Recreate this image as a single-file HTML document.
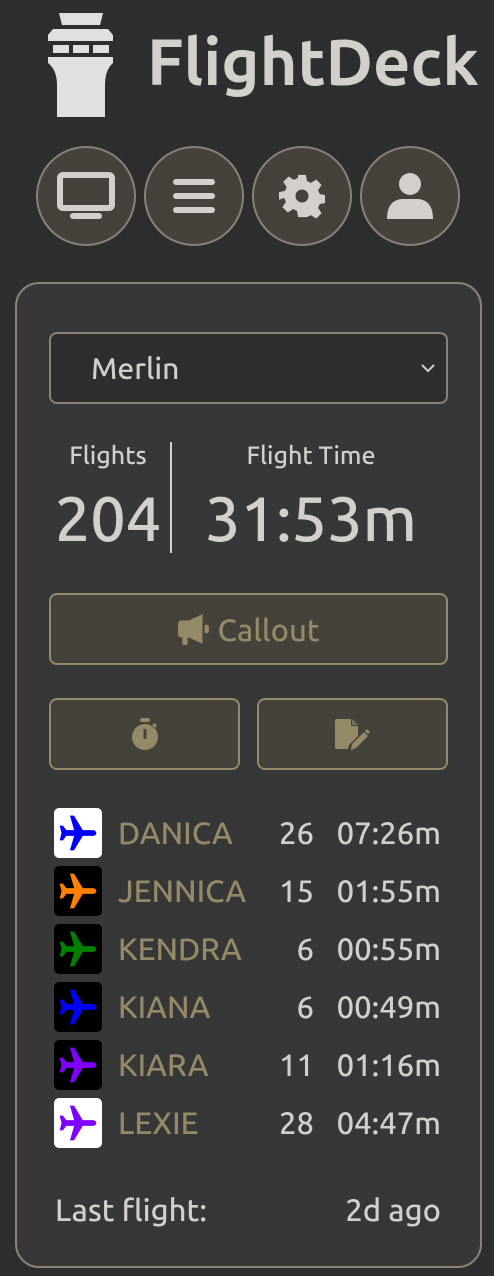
<!DOCTYPE html>
<html><head><meta charset="utf-8"><style>
*{box-sizing:border-box;margin:0;padding:0}
body{width:494px;height:1276px;background:#2e2e2e;font-family:"Ubuntu","Liberation Sans",sans-serif;font-weight:500;color:#d3d0cb;position:relative;overflow:hidden}
.abs{position:absolute}
.title{left:147px;top:20px;font-size:65px;font-weight:bold;color:#d3d0cb;line-height:84px;white-space:nowrap}
.circ{position:absolute;top:146px;width:100px;height:100px;border-radius:50%;background:#45413b;border:2px solid #8a8278;display:flex;align-items:center;justify-content:center}
.card{left:15px;top:282px;width:467px;height:986px;border:2px solid #8a8278;border-radius:24px;background:#373737}
.sel{left:49px;top:332px;width:399px;height:72px;border:2px solid #8a8278;border-radius:8px;background:#2e2e2e;font-size:30px;padding-left:40px;line-height:68px}
.btn{position:absolute;border:2px solid #958a68;border-radius:8px;background:#45413b;color:#958a68;display:flex;align-items:center;justify-content:center}
.row{position:absolute;left:54px;height:50px;width:390px}
.ic{position:absolute;left:0;top:0;width:48px;height:50px;border-radius:5px;display:flex;align-items:center;justify-content:center}
.nm{position:absolute;left:64px;top:0;line-height:50px;font-size:31px;color:#958a68;white-space:nowrap}
.ct{position:absolute;right:130px;top:0;line-height:50px;font-size:31px;text-align:right}
.tm{position:absolute;right:3px;top:0;line-height:50px;font-size:31px}
</style></head><body>
<svg class="abs" style="left:48px;top:13px" width="66" height="105" viewBox="48 13 66 105">
<g fill="#e0e0e0">
<polygon points="59,13 103,13 100,25 62,25"/>
<polygon points="53,29 108,29 113,35 113,41 48,41 48,35"/>
<rect x="53" y="45" width="16" height="8"/><rect x="73" y="45" width="16" height="8"/><rect x="93" y="45" width="16" height="8"/>
<path d="M48 57H113V63Q105 70 105 85V117H57V85Q57 70 48 63Z"/>
</g></svg>
<div class="abs title">FlightDeck</div>
<div class="circ" style="left:36px"><svg width="60" height="50" viewBox="0 0 60 50"><rect x="4" y="4" width="52" height="33" rx="3" fill="none" stroke="#d3d0cb" stroke-width="6"/><rect x="14" y="42" width="32" height="6" rx="3" fill="#d3d0cb"/></svg></div>
<div class="circ" style="left:144px"><svg width="44" height="40" viewBox="0 0 44 40"><g fill="#d3d0cb"><rect x="1" y="3" width="42" height="6" rx="3"/><rect x="1" y="17" width="42" height="6" rx="3"/><rect x="1" y="31" width="42" height="6" rx="3"/></g></svg></div>
<div class="circ" style="left:252px"><svg width="46" height="48" viewBox="0 0 24 24"><path fill="#d3d0cb" d="M10 1h4l.6 3.2 2 1 2.8-1.8 2.8 2.8-1.8 2.8.9 2 3.2.6v4l-3.2.6-.9 2 1.8 2.8-2.8 2.8-2.8-1.8-2 1L14 23h-4l-.6-3.2-2-1-2.8 1.8-2.8-2.8 1.8-2.8-.9-2L-.1 14v-4l3.2-.6.9-2-1.8-2.8 2.8-2.8 2.8 1.8 2-1zM12 8.6a3.4 3.4 0 100 6.8 3.4 3.4 0 000-6.8z" fill-rule="evenodd"/></svg></div>
<div class="circ" style="left:360px"><svg width="50" height="50" viewBox="0 0 50 50"><circle cx="25" cy="13" r="11" fill="#d3d0cb"/><path d="M2 48Q2 30 16 28H34Q48 30 48 48Z" fill="#d3d0cb"/></svg></div>
<div class="abs card"></div>
<div class="abs sel">Merlin<svg class="abs" style="right:10px;top:28px" width="16" height="12" viewBox="0 0 16 12"><path d="M2 3l6 6 6-6" fill="none" stroke="#d3d0cb" stroke-width="2"/></svg></div>
<div class="abs" style="left:55px;width:106px;top:441px;text-align:center;font-size:25px">Flights</div>
<div class="abs" style="left:48px;width:120px;top:478px;text-align:center;font-size:63px;line-height:80px">204</div>
<div class="abs" style="left:170px;top:442px;width:2px;height:111px;background:#d3d0cb"></div>
<div class="abs" style="left:180px;width:262px;top:441px;text-align:center;font-size:25px">Flight Time</div>
<div class="abs" style="left:180px;width:262px;top:478px;text-align:center;font-size:63px;line-height:80px;white-space:nowrap">31:53m</div>
<div class="btn" style="left:49px;top:593px;width:399px;height:72px;font-size:31px"><svg width="34" height="34" viewBox="0 0 32 32" style="margin-right:6px"><path fill="#958a68" d="M1 11a3 3 0 013-3h7l13-6v28l-13-6H10v6a1 1 0 01-1 1H6a1 1 0 01-1-1v-6H4a3 3 0 01-3-3z"/><path fill="#958a68" d="M26 12h2a2 2 0 012 2v4a2 2 0 01-2 2h-2z"/></svg>Callout</div>
<div class="btn" style="left:49px;top:698px;width:191px;height:72px"><svg width="28" height="34" viewBox="0 0 28 34"><rect x="9" y="1" width="10" height="4" rx="2" fill="#958a68"/><circle cx="14" cy="20" r="13" fill="#958a68"/><rect x="12.5" y="12" width="3" height="10" fill="#45413b"/><rect x="22" y="7" width="4" height="3" transform="rotate(45 24 8)" fill="#958a68"/></svg></div>
<div class="btn" style="left:257px;top:698px;width:191px;height:72px"><svg width="38" height="34" viewBox="0 0 38 34"><path fill="#958a68" d="M3 2h14l7 7v10l-9 9-1 4H3a2 2 0 01-2-2V4a2 2 0 012-2z"/><path fill="#45413b" d="M17 2v7h7z"/><path fill="#958a68" d="M18 2l6 6h-6z" opacity=".7"/><path fill="#958a68" d="M17 33l1-6 12-12 4 4-12 12z"/><path fill="#958a68" d="M31 14l2-2 3 3-2 2z"/></svg></div>

<div class="row" style="top:808px"><div class="ic" style="background:#fff"><svg width="44" height="44" viewBox="0 0 24 24"><path fill="#0000ff" d="M22 12c0-1-1-1.6-2.2-1.6h-5.2L9.8 2.5H7.6l2.3 7.9H5.6L3.8 8H2l1 4-1 4h1.8l1.8-2.4h4.3l-2.3 7.9h2.2l4.8-7.9h5.2c1.2 0 2.2-.6 2.2-1.6z"/></svg></div><div class="nm">DANICA</div><div class="ct">26</div><div class="tm">07:26m</div></div>
<div class="row" style="top:866px"><div class="ic" style="background:#000"><svg width="44" height="44" viewBox="0 0 24 24"><path fill="#ff8000" d="M22 12c0-1-1-1.6-2.2-1.6h-5.2L9.8 2.5H7.6l2.3 7.9H5.6L3.8 8H2l1 4-1 4h1.8l1.8-2.4h4.3l-2.3 7.9h2.2l4.8-7.9h5.2c1.2 0 2.2-.6 2.2-1.6z"/></svg></div><div class="nm">JENNICA</div><div class="ct">15</div><div class="tm">01:55m</div></div>
<div class="row" style="top:924px"><div class="ic" style="background:#000"><svg width="44" height="44" viewBox="0 0 24 24"><path fill="#008000" d="M22 12c0-1-1-1.6-2.2-1.6h-5.2L9.8 2.5H7.6l2.3 7.9H5.6L3.8 8H2l1 4-1 4h1.8l1.8-2.4h4.3l-2.3 7.9h2.2l4.8-7.9h5.2c1.2 0 2.2-.6 2.2-1.6z"/></svg></div><div class="nm">KENDRA</div><div class="ct">6</div><div class="tm">00:55m</div></div>
<div class="row" style="top:982px"><div class="ic" style="background:#000"><svg width="44" height="44" viewBox="0 0 24 24"><path fill="#0000ff" d="M22 12c0-1-1-1.6-2.2-1.6h-5.2L9.8 2.5H7.6l2.3 7.9H5.6L3.8 8H2l1 4-1 4h1.8l1.8-2.4h4.3l-2.3 7.9h2.2l4.8-7.9h5.2c1.2 0 2.2-.6 2.2-1.6z"/></svg></div><div class="nm">KIANA</div><div class="ct">6</div><div class="tm">00:49m</div></div>
<div class="row" style="top:1040px"><div class="ic" style="background:#000"><svg width="44" height="44" viewBox="0 0 24 24"><path fill="#8000ff" d="M22 12c0-1-1-1.6-2.2-1.6h-5.2L9.8 2.5H7.6l2.3 7.9H5.6L3.8 8H2l1 4-1 4h1.8l1.8-2.4h4.3l-2.3 7.9h2.2l4.8-7.9h5.2c1.2 0 2.2-.6 2.2-1.6z"/></svg></div><div class="nm">KIARA</div><div class="ct">11</div><div class="tm">01:16m</div></div>
<div class="row" style="top:1098px"><div class="ic" style="background:#fff"><svg width="44" height="44" viewBox="0 0 24 24"><path fill="#8000ff" d="M22 12c0-1-1-1.6-2.2-1.6h-5.2L9.8 2.5H7.6l2.3 7.9H5.6L3.8 8H2l1 4-1 4h1.8l1.8-2.4h4.3l-2.3 7.9h2.2l4.8-7.9h5.2c1.2 0 2.2-.6 2.2-1.6z"/></svg></div><div class="nm">LEXIE</div><div class="ct">28</div><div class="tm">04:47m</div></div>

<div class="abs" style="left:55px;top:1192px;font-size:31px;line-height:36px">Last flight:</div>
<div class="abs" style="right:53px;top:1192px;font-size:31px;line-height:36px">2d ago</div>
</body></html>
